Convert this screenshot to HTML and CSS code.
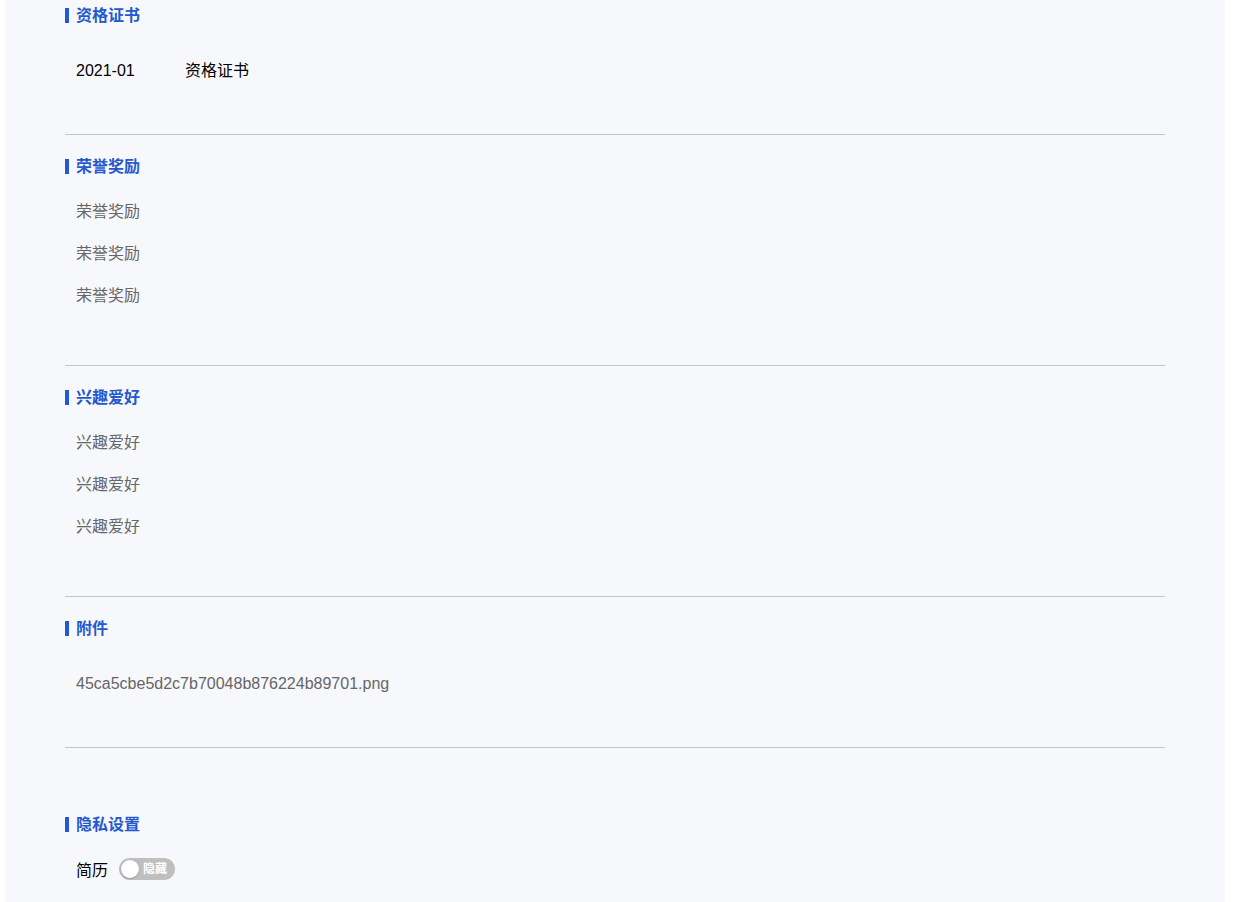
FILE: index.html
```html
<!DOCTYPE html>
<html>
<head>
  <meta charset="utf-8">
  <title>简历详情</title>
  <link rel="stylesheet" href="styles.css">
</head>
<body>
  <div class="page">

    <div class="section">
      <h3 class="section-title">资格证书</h3>
      <div class="record-list">
        <div class="record">
          <span class="record-date">2021-01</span>
          <span class="record-name">资格证书</span>
        </div>
      </div>
    </div>

    <div class="section">
      <h3 class="section-title">荣誉奖励</h3>
      <ul class="item-list">
        <li>荣誉奖励</li>
        <li>荣誉奖励</li>
        <li>荣誉奖励</li>
      </ul>
    </div>

    <div class="section">
      <h3 class="section-title">兴趣爱好</h3>
      <ul class="item-list">
        <li>兴趣爱好</li>
        <li>兴趣爱好</li>
        <li>兴趣爱好</li>
      </ul>
    </div>

    <div class="section">
      <h3 class="section-title">附件</h3>
      <div class="record-list">
        <div class="record file">45ca5cbe5d2c7b70048b876224b89701.png</div>
      </div>
    </div>

    <div class="section privacy">
      <h3 class="section-title">隐私设置</h3>
      <div class="privacy-row">
        <span>简历</span>
        <span class="switch">
          <span class="switch-knob"></span>
          <span class="switch-text">隐藏</span>
        </span>
      </div>
    </div>

  </div>
</body>
</html>
```

FILE: styles.css
```css
html, body {
  margin: 0;
  padding: 0;
  background-color: #fff;
  overflow: hidden;
}
body {
  font-family: "Liberation Sans", Arial, "Noto Sans CJK SC", sans-serif;
  font-size: 16px;
  color: #000;
}
.page {
  width: 1220px;
  min-height: 100vh;
  margin-left: 5px;
  padding: 0 60px;
  box-sizing: border-box;
  background-color: #f7f8fc;
}
.section {
  padding-top: 21px;
  border-bottom: 1px solid #c4c5cb;
}
.section:first-child {
  padding-top: 5px;
}
.section-title {
  position: relative;
  margin: 0;
  padding-left: 11px;
  height: 22px;
  line-height: 22px;
  font-size: 16px;
  font-weight: bold;
  color: #2458cf;
}
.section-title::before {
  content: "";
  position: absolute;
  left: 0;
  top: 3px;
  width: 4px;
  height: 15px;
  background-color: #1f59d4;
}
.record-list {
  padding: 23px 0 42px 11px;
}
.record {
  display: flex;
  line-height: 42px;
}
.record-date {
  width: 109px;
}
.file {
  color: #666;
}
.item-list {
  list-style: none;
  margin: 0;
  padding: 13px 0 48px 11px;
}
.item-list li {
  line-height: 42px;
  color: #666;
}
.privacy {
  margin-top: 45px;
  border-bottom: none;
}
.privacy-row {
  display: flex;
  align-items: center;
  height: 42px;
  margin-top: 12px;
  padding-left: 11px;
}
.switch {
  position: relative;
  display: inline-block;
  width: 56px;
  height: 22px;
  margin-left: 11px;
  border-radius: 11px;
  background-color: #bfbfbf;
}
.switch-knob {
  position: absolute;
  left: 2px;
  top: 2px;
  width: 18px;
  height: 18px;
  border-radius: 50%;
  background-color: #fff;
  box-shadow: 0 1px 2px rgba(0,0,0,0.2);
}
.switch-text {
  position: absolute;
  left: 24px;
  top: 0;
  line-height: 22px;
  font-size: 12px;
  font-weight: bold;
  color: #fff;
}
```
